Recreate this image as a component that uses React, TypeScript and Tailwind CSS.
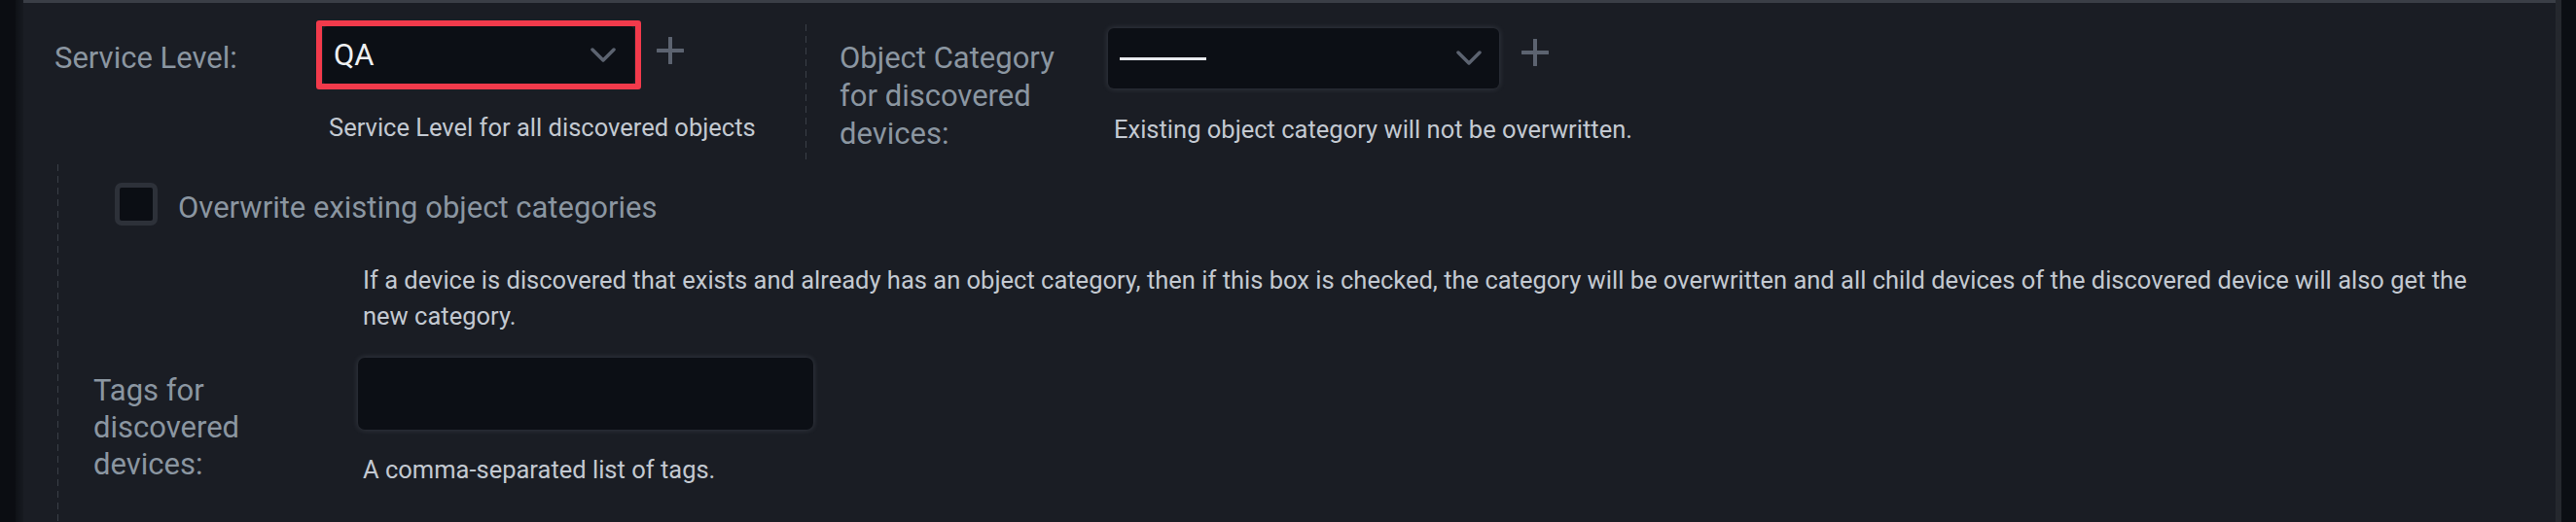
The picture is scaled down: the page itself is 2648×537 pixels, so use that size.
import React from "react";

function Chevron() {
  return (
    <svg width="26" height="16" viewBox="0 0 26 16" fill="none">
      <path d="M2 2 L13 13 L24 2" stroke="#5c6370" strokeWidth="3.5" strokeLinecap="round" strokeLinejoin="round" />
    </svg>
  );
}

function Plus() {
  return (
    <svg width="28" height="28" viewBox="0 0 28 28" fill="none">
      <path d="M14 1 V27 M1 14 H27" stroke="#5c6370" strokeWidth="4" strokeLinecap="round" />
    </svg>
  );
}

const dash =
  "bg-[linear-gradient(to_bottom,#3a3f47_55%,transparent_55%)] bg-[length:1px_12px] bg-repeat-y";

export default function App() {
  return (
    <div className="flex h-[537px] w-[2648px] bg-[#0b0e13] font-['Roboto',sans-serif] overflow-hidden">
      <div className="w-[16px] bg-[#0b0d12]" />
      <div className="w-[8px] bg-gradient-to-r from-[#0f1217] to-[#171a20]" />
      <div className="flex-1 flex flex-col bg-[#1a1d24] border-t-[3px] border-[#3a3e46]">
        {/* Row 1 */}
        <div className="flex h-[166px]">
          <div className="w-[804px] flex">
            <div className="w-[308px] pl-[32px] pt-[37px] text-[31px] leading-[39px] text-[#8b96a1]">
              Service Level:
            </div>
            <div className="flex flex-col pt-[24px]">
              <div className="flex items-start">
                <div className="relative">
                  <div className="w-[320px] h-[60px] bg-[#0c0f15] rounded-[5px] flex items-center justify-between pl-[11px] pr-[19px]">
                    <span className="text-[31px] text-[#eef0f2]">QA</span>
                    <Chevron />
                  </div>
                  <div className="absolute -left-[7px] -right-[7px] -top-[6px] -bottom-[5px] border-[6px] border-[#f23a4b] rounded-[3px]" />
                </div>
                <div className="ml-[23px] mt-[11px]">
                  <Plus />
                </div>
              </div>
              <div className="mt-[26px] pl-[6px] text-[25.5px] leading-[37px] text-[#c3c9d1]">
                Service Level for all discovered objects
              </div>
            </div>
          </div>
          <div className={`w-[1px] mt-[22px] ${dash}`} />
          <div className="flex">
            <div className="w-[310px] pl-[34px] pt-[37px] text-[31px] leading-[39px] text-[#8b96a1]">
              Object Category
              <br />
              for discovered
              <br />
              devices:
            </div>
            <div className="flex flex-col pt-[26px]">
              <div className="flex items-start">
                <div className="w-[402px] h-[62px] bg-[#0c0f15] rounded-[6px] shadow-[0_0_6px_rgba(200,210,230,0.18)] flex items-center justify-between pl-[12px] pr-[18px]">
                  <div className="w-[89px] h-[3px] bg-[#e8eaee]" />
                  <Chevron />
                </div>
                <div className="ml-[23px] mt-[11px]">
                  <Plus />
                </div>
              </div>
              <div className="mt-[24px] pl-[6px] text-[25.5px] leading-[37px] text-[#c3c9d1]">
                Existing object category will not be overwritten.
              </div>
            </div>
          </div>
        </div>
        {/* Row 2 */}
        <div className="flex flex-1">
          <div className="w-[35px]" />
          <div className={`w-[1px] ${dash}`} />
          <div className="flex flex-col">
            <div className="flex items-start pt-[19px] pl-[58px]">
              <div className="w-[44px] h-[44px] border-[5px] border-[#2d3139] rounded-[7px] bg-[#0b0e14]" />
              <div className="ml-[21px] mt-[6px] text-[31px] leading-[39px] text-[#8b96a1]">
                Overwrite existing object categories
              </div>
            </div>
            <div className="pl-[313px] mt-[37px] text-[25.5px] leading-[37px] text-[#c3c9d1] whitespace-nowrap">
              If a device is discovered that exists and already has an object category, then if this box is checked, the category will be overwritten and all child devices of the discovered device will also get the
              <br />
              new category.
            </div>
            <div className="flex items-start mt-[24px] pl-[36px]">
              <div className="w-[272px] mt-[15px] text-[31px] leading-[38px] text-[#8b96a1]">
                Tags for
                <br />
                discovered
                <br />
                devices:
              </div>
              <div className="flex flex-col">
                <div className="w-[468px] h-[74px] bg-[#0c0f15] rounded-[7px] shadow-[0_0_6px_rgba(200,210,230,0.18)]" />
                <div className="mt-[23px] pl-[5px] text-[25.5px] leading-[37px] text-[#c3c9d1]">
                  A comma-separated list of tags.
                </div>
              </div>
            </div>
          </div>
        </div>
      </div>
      <div className="w-[6px] bg-[#25282e]" />
      <div className="w-[15px] bg-[#0b0e13]" />
    </div>
  );
}
